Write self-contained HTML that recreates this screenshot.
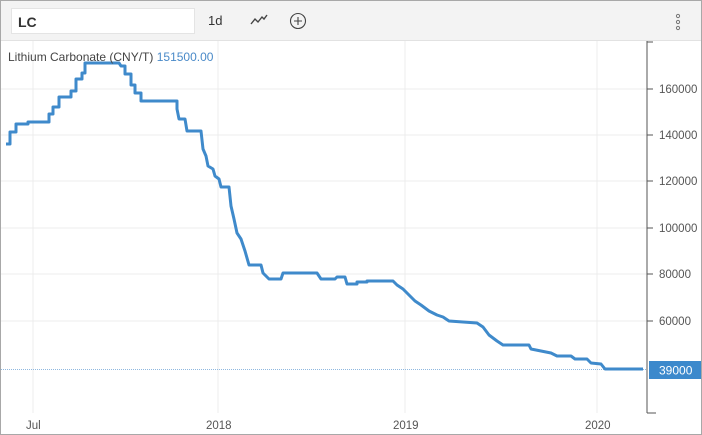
<!DOCTYPE html>
<html><head><style>
body{margin:0;width:702px;height:435px;overflow:hidden;background:#fff;font-family:"Liberation Sans",sans-serif;}
.wrap{position:absolute;left:0;top:0;width:700px;height:433px;border:1px solid #a8a8a8;}
.bar{position:absolute;left:0;top:0;width:700px;height:39px;background:#f3f3f3;border-bottom:1px solid #e2e2e2;}
.inp{position:absolute;left:10px;top:7px;width:184px;height:26px;background:#fff;border:1px solid #e4e4e4;font-weight:bold;font-size:14px;line-height:26px;padding-left:6px;box-sizing:border-box;color:#333;}
.t{position:absolute;font-size:12px;color:#555;}
</style></head><body>
<div class="wrap">
<div class="bar">
<div class="inp">LC</div>
<div class="t" style="left:207px;top:12px;font-size:13px;color:#333">1d</div>
<svg style="position:absolute;left:249px;top:13px" width="18" height="12"><path d="M1 10 L5 5 L8 8 L12 3 L14 5 L17 1" fill="none" stroke="#444" stroke-width="1.4"/></svg>
<svg style="position:absolute;left:288px;top:11px" width="18" height="18"><circle cx="9" cy="9" r="7.5" fill="none" stroke="#444" stroke-width="1.1"/><path d="M9 5V13M5 9H13" stroke="#444" stroke-width="1.1"/></svg>
<svg style="position:absolute;left:673px;top:12px" width="8" height="18"><circle cx="4" cy="3" r="1.6" fill="none" stroke="#777"/><circle cx="4" cy="9" r="1.6" fill="none" stroke="#777"/><circle cx="4" cy="15" r="1.6" fill="none" stroke="#777"/></svg>
</div>
<svg style="position:absolute;left:0;top:0" width="700" height="433">
<g stroke="#ececec" stroke-width="1">
<path d="M0 88H646M0 134H646M0 180H646M0 227H646M0 273H646M0 320H646"/>
<path d="M32 40V412M217 40V412M404 40V412M596 40V412"/>
</g>
<path d="M646 40V412M646 412H655M646 41H652M646 88H652M646 134H652M646 180H652M646 227H652M646 273H652M646 320H652" stroke="#555" stroke-width="1" fill="none"/>
<path d="M0 368.5H646" stroke="#8fb8e0" stroke-width="1" stroke-dasharray="1,1"/>
<path d="M5 143L9 143L9 131L15 131L15 123L27 123L27 121L48 121L48 113L52 113L52 106L58 106L58 96L70 96L70 90L75 90L75 78L81 78L81 72L84 72L84 62L118 62L120 65L124 65L124 73L130 73L130 84L134 84L134 92L140 92L140 100L176 100L176 108L178 118L184 118L186 130L200 130L202 148L205 155L207 165L212 168L214 175L218 178L220 186L228 186L230 205L233 218L236 232L240 238L244 250L248 264L260 264L262 272L268 278L280 278L282 272L316 272L320 278L334 278L336 276L344 276L346 283L356 283L356 281L366 281L366 280L392 280L396 284L402 288L408 294L414 300L420 304L428 310L436 314L442 316L448 320L476 322L482 326L488 334L496 340L502 344L528 344L530 348L540 350L550 352L556 355L570 355L574 358L586 358L590 362L600 363L604 368L642 368" fill="none" stroke="#3f8acb" stroke-width="3" stroke-linejoin="round"/>
<rect x="648" y="360" width="52" height="18" fill="#3c89cc"/>
<text x="658" y="373.5" font-size="12" fill="#fff" font-family="Liberation Sans">39000</text>
<g font-size="11.5" fill="#555" font-family="Liberation Sans">
<text x="658" y="92">160000</text><text x="658" y="138">140000</text><text x="658" y="184">120000</text>
<text x="658" y="231">100000</text><text x="658" y="277">80000</text><text x="658" y="324">60000</text>
<text x="25" y="428">Jul</text><text x="205" y="428">2018</text><text x="392" y="428">2019</text><text x="584" y="428">2020</text>
</g>
<text x="7" y="60" font-size="12" fill="#444" font-family="Liberation Sans">Lithium Carbonate (CNY/T) <tspan fill="#4a8ac8">151500.00</tspan></text>
</svg>
</div>
</body></html>
